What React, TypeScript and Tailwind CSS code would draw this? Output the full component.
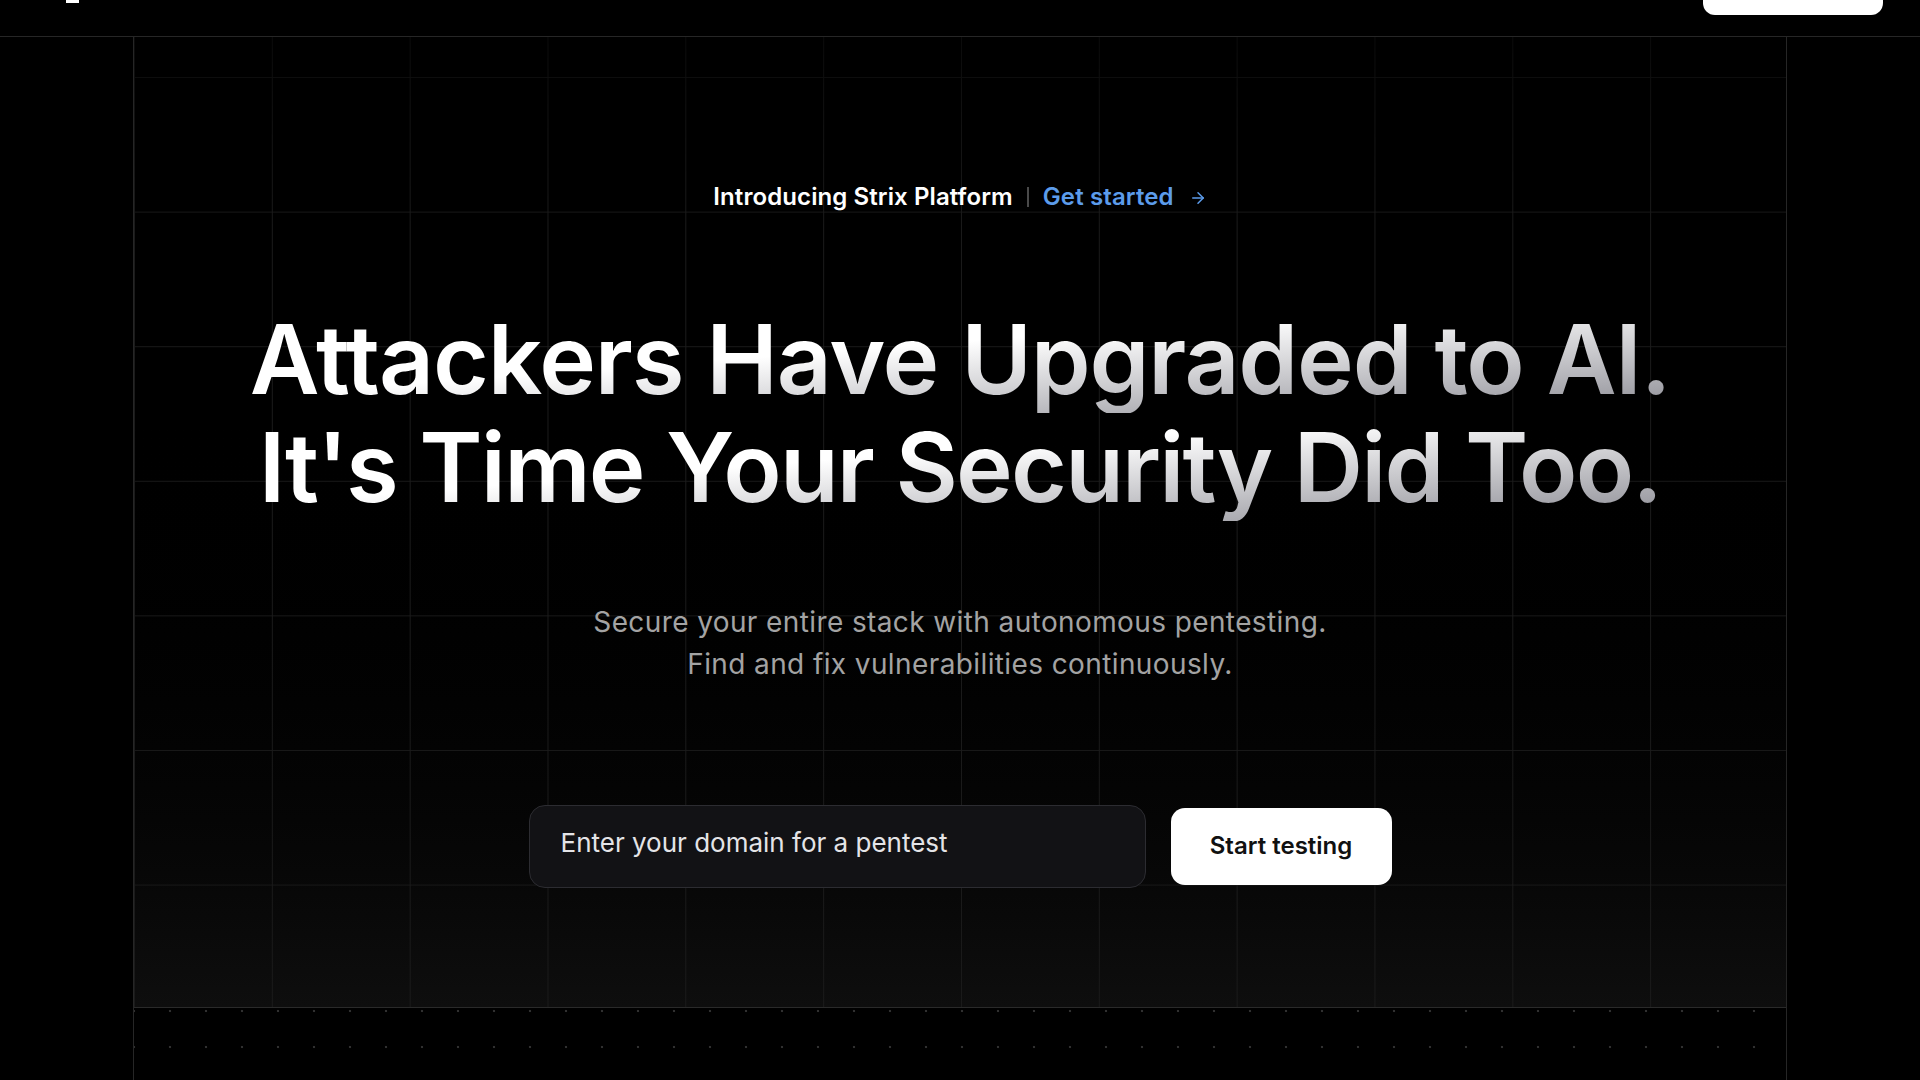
import React from "react";
import { ArrowRight } from "lucide-react";

function Header() {
  return (
    <header className="h-[37px] w-full overflow-hidden border-b border-[#262626]">
      <div className="-mt-[33px] flex h-[48px] items-center justify-between pl-[66px] pr-[37px]">
        <svg width="13" height="24" viewBox="0 0 13 24" fill="none">
          <path d="M0 0 H13 V24 H0 Z" fill="#ffffff" />
        </svg>
        <div className="h-[48px] w-[180px] rounded-[12px] bg-white" />
      </div>
    </header>
  );
}

function Hero() {
  return (
    <section className="relative h-[971px] border-b border-[#2a2a2a] bg-gradient-to-b from-black from-35% to-[#0e0e0e]">
      <div className="pointer-events-none absolute inset-0 bg-[linear-gradient(to_right,#1b1b1b_1px,transparent_1px),linear-gradient(to_bottom,#191919_1px,transparent_1px)] bg-size-[137.83px_134.6px] bg-position-[0_40px] [mask-image:linear-gradient(to_bottom,rgba(0,0,0,0.4),black_20%)]" />
      <div className="relative flex flex-col items-center pt-[144px]">
        <div className="flex h-[32px] items-center gap-[14px] text-[24px] leading-[32px]">
          <span className="font-semibold tracking-[0.004em] text-white">Introducing Strix Platform</span>
          <span className="h-[20px] w-[2px] bg-[#4a4a4a]" />
          <a className="flex items-center gap-[15px] font-semibold tracking-[0.005em] text-[#5c9ceb]">
            Get started
            <ArrowRight size={18} strokeWidth={2} className="mt-[1px]" />
          </a>
        </div>

        <h1 className="mt-[92px] flex flex-col items-center text-[96px] font-semibold leading-[108px]">
          <span className="inline-block bg-[linear-gradient(to_bottom_right,#ffffff_42%,#8c8c94)] bg-clip-text tracking-[-0.012em] text-transparent">
            Attackers Have Upgraded to AI.
          </span>
          <span className="inline-block bg-[linear-gradient(to_bottom_right,#ffffff_42%,#8c8c94)] bg-clip-text tracking-[-0.019em] text-transparent">
            It's Time Your Security Did Too.
          </span>
        </h1>

        <p className="mt-[80px] text-center text-[28px] leading-[42px] tracking-[0.014em] text-[#a3a3a3]">
          Secure your entire stack with autonomous pentesting.
          <br />
          Find and fix vulnerabilities continuously.
        </p>

        <div className="mt-[120px] flex items-center gap-[25px]">
          <div className="flex h-[83px] w-[617px] items-center rounded-[16px] border border-[#2c2c31] bg-[#121215] px-[31px] pb-[9px]">
            <input
              className="w-full bg-transparent text-[26px] text-[#e6e6e6] outline-none placeholder:text-[#e4e4e7]"
              placeholder="Enter your domain for a pentest"
            />
          </div>
          <button className="h-[77px] w-[221px] rounded-[14px] bg-white pb-[2px] text-[24px] font-semibold text-[#111111]">
            Start testing
          </button>
        </div>
      </div>
    </section>
  );
}

export default function App() {
  return (
    <div className="h-[1080px] w-full overflow-hidden bg-black font-['Inter',sans-serif]">
      <Header />
      <div className="px-[133px]">
        <div className="border-x border-[#262626]">
          <Hero />
          <div className="h-[300px] bg-[radial-gradient(circle,#303030_1px,transparent_1.6px)] bg-size-[36px_36px] bg-position-[18px_-15px]" />
        </div>
      </div>
    </div>
  );
}
